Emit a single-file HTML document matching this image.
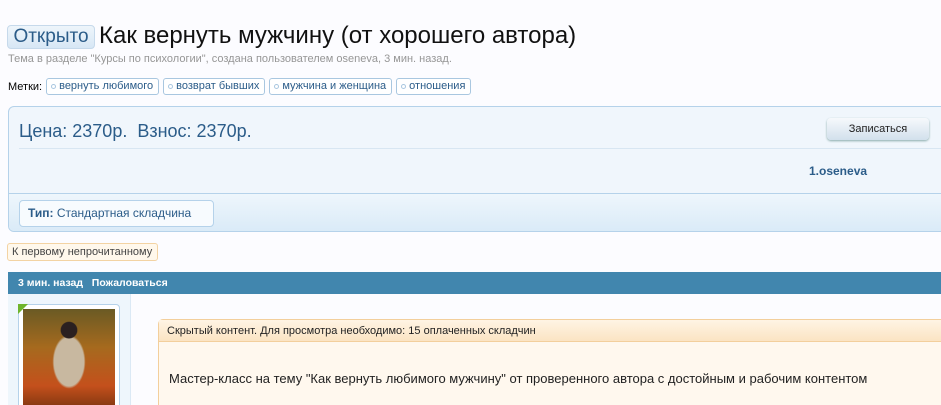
<!DOCTYPE html>
<html><head><meta charset="utf-8"><style>
*{margin:0;padding:0;box-sizing:border-box}
html,body{width:941px;height:405px;overflow:hidden}
body{background:#fcfcff;font-family:"Liberation Sans",Arial,sans-serif;position:relative;color:#000}
.a{position:absolute}
.open{left:7px;top:25px;width:88px;height:24px;background:linear-gradient(#eef5fb,#d7e7f5);border:1px solid #c6d9eb;border-radius:4px;color:#2b5c89;font-size:19px;line-height:22px;text-align:center}
h1{left:99px;top:22px;font-size:24px;font-weight:normal;color:#111;white-space:nowrap}
.sub{left:8px;top:53px;font-size:11px;color:#969696}
.tags{left:8px;top:78px;font-size:11px;display:flex;gap:4px;align-items:center}
.tag{border:1px solid #a9c7e0;border-radius:3px;padding:1px 5px 1px 12px;color:#2b5c89;background:#fff;position:relative;line-height:13px}
.tag:before{content:"";position:absolute;left:4px;top:5px;width:3px;height:3px;border:1px solid #a9c7e0;border-radius:50%}
.box{left:8px;top:106px;width:945px;height:126px;border:1px solid #b5d2ea;border-radius:6px;background:#f0f6fc;overflow:hidden}
.price{left:10px;top:14px;font-size:18px;color:#2b5c89;white-space:nowrap}
.line{left:10px;top:41px;width:930px;height:1px;background:#d8e6f2}
.btn{left:818px;top:11px;width:102px;height:22px;border-radius:4px;background:linear-gradient(#f6f9fc,#d2e0ec);box-shadow:0 1px 2px #8aa;font-size:11px;text-align:center;line-height:22px;color:#222}
.user{left:800px;top:57px;font-size:12px;font-weight:bold;color:#2b5c89}
.low{left:0;top:86px;width:945px;height:40px;border-top:1px solid #b5d2ea;background:linear-gradient(#eef6fc,#d9eaf7)}
.tip{left:10px;top:6px;height:27px;width:195px;border:1px solid #b5d2ea;border-radius:4px;background:#f7fbfe;font-size:12px;line-height:25px;padding-left:8px;color:#2b5c89}
.first{left:7px;top:243px;width:151px;height:18px;border:1px solid #f3d3a3;border-radius:3px;background:#fff8ec;font-size:11px;line-height:16px;padding-left:4px;color:#444}
.bar{left:8px;top:272px;width:933px;height:22px;background:#4186ae;color:#fff;font-size:10.5px;font-weight:bold;line-height:22px;padding-left:10px}
.side{left:8px;top:294px;width:123px;height:111px;background:#eef6fc;border-right:1px solid #dbe9f5}
.av{left:18px;top:304px;width:102px;height:110px;border:1px solid #b5d2ea;border-radius:4px;background:#fff;padding:4px}
.img{width:92px;height:96px;background:radial-gradient(circle at 50% 22%,#2a2020 0 9%,transparent 10%),radial-gradient(ellipse 18% 28% at 50% 55%,#c8b8a0 0 90%,transparent 100%),linear-gradient(#6a5a24,#a66a1e 40%,#c4501c 80%,#8a3a12)}
.corner{left:18px;top:304px;width:0;height:0;border-top:10px solid #6fb52c;border-right:10px solid transparent}
.hid{left:158px;top:319px;width:800px;height:100px;border:1px solid #f3cf9c;border-radius:5px;background:#fff8ee}
.hh{height:22px;background:linear-gradient(#fff4e4,#fbe4c3);border-bottom:1px solid #f3cf9c;font-size:11px;line-height:22px;padding-left:8px;color:#222}
.txt{left:10px;top:51px;font-size:13px;color:#222;white-space:nowrap}
</style></head><body>
<div class="a open">Открыто</div>
<h1 class="a">Как вернуть мужчину (от хорошего автора)</h1>
<div class="a sub">Тема в разделе "Курсы по психологии", создана пользователем oseneva, 3 мин. назад.</div>
<div class="a tags"><span>Метки:</span><span class="tag">вернуть любимого</span><span class="tag">возврат бывших</span><span class="tag">мужчина и женщина</span><span class="tag">отношения</span></div>
<div class="a box">
<div class="a price">Цена: 2370р.&nbsp; Взнос: 2370р.</div>
<div class="a btn">Записаться</div>
<div class="a line"></div>
<div class="a user">1.oseneva</div>
<div class="a low"><div class="a tip"><b>Тип:</b> Стандартная складчина</div></div>
</div>
<div class="a first">К первому непрочитанному</div>
<div class="a bar">3 мин. назад &nbsp; Пожаловаться</div>
<div class="a side"></div>
<div class="a av"><div class="img"></div></div>
<div class="a corner"></div>
<div class="a hid"><div class="hh">Скрытый контент. Для просмотра необходимо: 15 оплаченных складчин</div>
<div class="a txt">Мастер-класс на тему "Как вернуть любимого мужчину" от проверенного автора с достойным и рабочим контентом</div></div>
</body></html>
